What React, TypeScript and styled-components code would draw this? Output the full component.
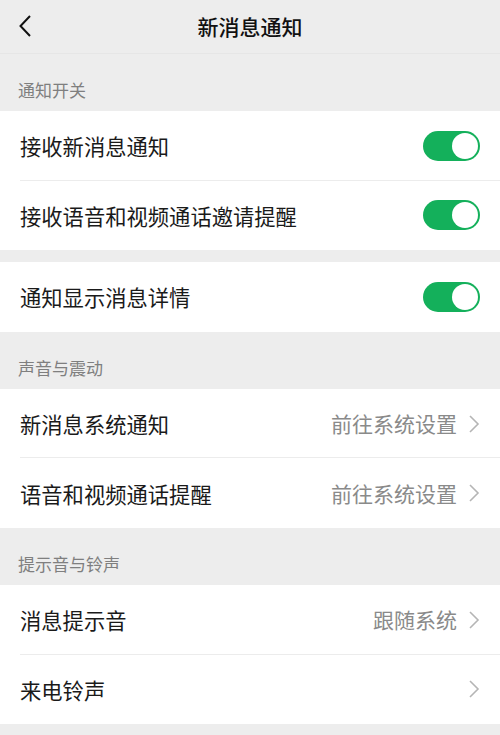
import { FunctionComponent } from "react";
import styled, { createGlobalStyle } from "styled-components";

const GlobalStyle = createGlobalStyle`
    * {
        box-sizing: border-box;
    }

    body {
        margin: 0;
        background: #ededed;
        font-family: "Noto Sans CJK SC", "Noto Sans", sans-serif;
        color: #1a1a1a;
    }
`;

const Page = styled.div`
    display: flex;
    flex-direction: column;
    width: 500px;
    min-height: 735px;
    background: #ededed;
`;

const Header = styled.div`
    display: flex;
    align-items: center;
    justify-content: center;
    height: 54px;
    position: relative;
    border-bottom: 1px solid #e6e6e6;
`;

const BackButton = styled.div`
    position: absolute;
    left: 14px;
    top: 13px;
    width: 22px;
    height: 26px;
    display: flex;
    align-items: center;
    justify-content: center;
`;

const Title = styled.div`
    font-size: 21px;
    font-weight: 500;
    line-height: 1;
    color: #111;
`;

const SectionLabel = styled.div`
    display: flex;
    align-items: flex-end;
    height: 57px;
    padding: 0 0 9px 18px;
    font-size: 17px;
    color: #7f7f7f;
`;

const Gap = styled.div`
    height: 12px;
`;

const Group = styled.div`
    display: flex;
    flex-direction: column;
    background: #fff;
`;

const Row = styled.div<{ $divider?: boolean }>`
    display: flex;
    align-items: center;
    height: 69.6px;
    padding: 0 20px;
    position: relative;

    ${(p) =>
        p.$divider &&
        `
        &::after {
            content: "";
            position: absolute;
            left: 20px;
            right: 0;
            bottom: 0;
            height: 1px;
            background: #ececec;
        }
    `}
`;

const RowTitle = styled.div`
    flex: 1;
    font-size: 21.3px;
    line-height: 1;
    color: #1a1a1a;
`;

const RowValue = styled.div`
    font-size: 21px;
    line-height: 1;
    color: #8a8a8a;
    margin-right: 11px;
`;

const Toggle = styled.div<{ $on: boolean }>`
    width: 57px;
    height: 30px;
    border-radius: 15px;
    background: ${(p) => (p.$on ? "#14b05b" : "#e5e5e5")};
    padding: 2px;
    display: flex;
    justify-content: ${(p) => (p.$on ? "flex-end" : "flex-start")};

    span {
        display: block;
        width: 26px;
        height: 26px;
        border-radius: 13px;
        background: #fff;
    }
`;

const Chevron = () => (
    <svg width="12" height="20" viewBox="0 0 12 20">
        <path d="M2 2 L10 10 L2 18" fill="none" stroke="#b5b5b5" strokeWidth="1.6" />
    </svg>
);

interface SettingRowProps {
    title: string;
    divider?: boolean;
    toggle?: boolean;
    value?: string;
}

const SettingRow: FunctionComponent<SettingRowProps> = ({ title, divider, toggle, value }) => (
    <Row $divider={divider}>
        <RowTitle>{title}</RowTitle>
        {toggle !== undefined ? (
            <Toggle $on={toggle}>
                <span />
            </Toggle>
        ) : (
            <>
                {value && <RowValue>{value}</RowValue>}
                <Chevron />
            </>
        )}
    </Row>
);

const App: FunctionComponent = () => {
    return (
        <Page>
            <GlobalStyle />
            <Header>
                <BackButton>
                    <svg width="14" height="24" viewBox="0 0 14 24">
                        <path d="M12 2 L2.5 12 L12 22" fill="none" stroke="#111" strokeWidth="2" />
                    </svg>
                </BackButton>
                <Title>新消息通知</Title>
            </Header>

            <SectionLabel>通知开关</SectionLabel>
            <Group>
                <SettingRow title="接收新消息通知" toggle divider />
                <SettingRow title="接收语音和视频通话邀请提醒" toggle />
            </Group>
            <Gap />
            <Group>
                <SettingRow title="通知显示消息详情" toggle />
            </Group>

            <SectionLabel>声音与震动</SectionLabel>
            <Group>
                <SettingRow title="新消息系统通知" value="前往系统设置" divider />
                <SettingRow title="语音和视频通话提醒" value="前往系统设置" />
            </Group>

            <SectionLabel>提示音与铃声</SectionLabel>
            <Group>
                <SettingRow title="消息提示音" value="跟随系统" divider />
                <SettingRow title="来电铃声" />
            </Group>
        </Page>
    );
};

export default App;
